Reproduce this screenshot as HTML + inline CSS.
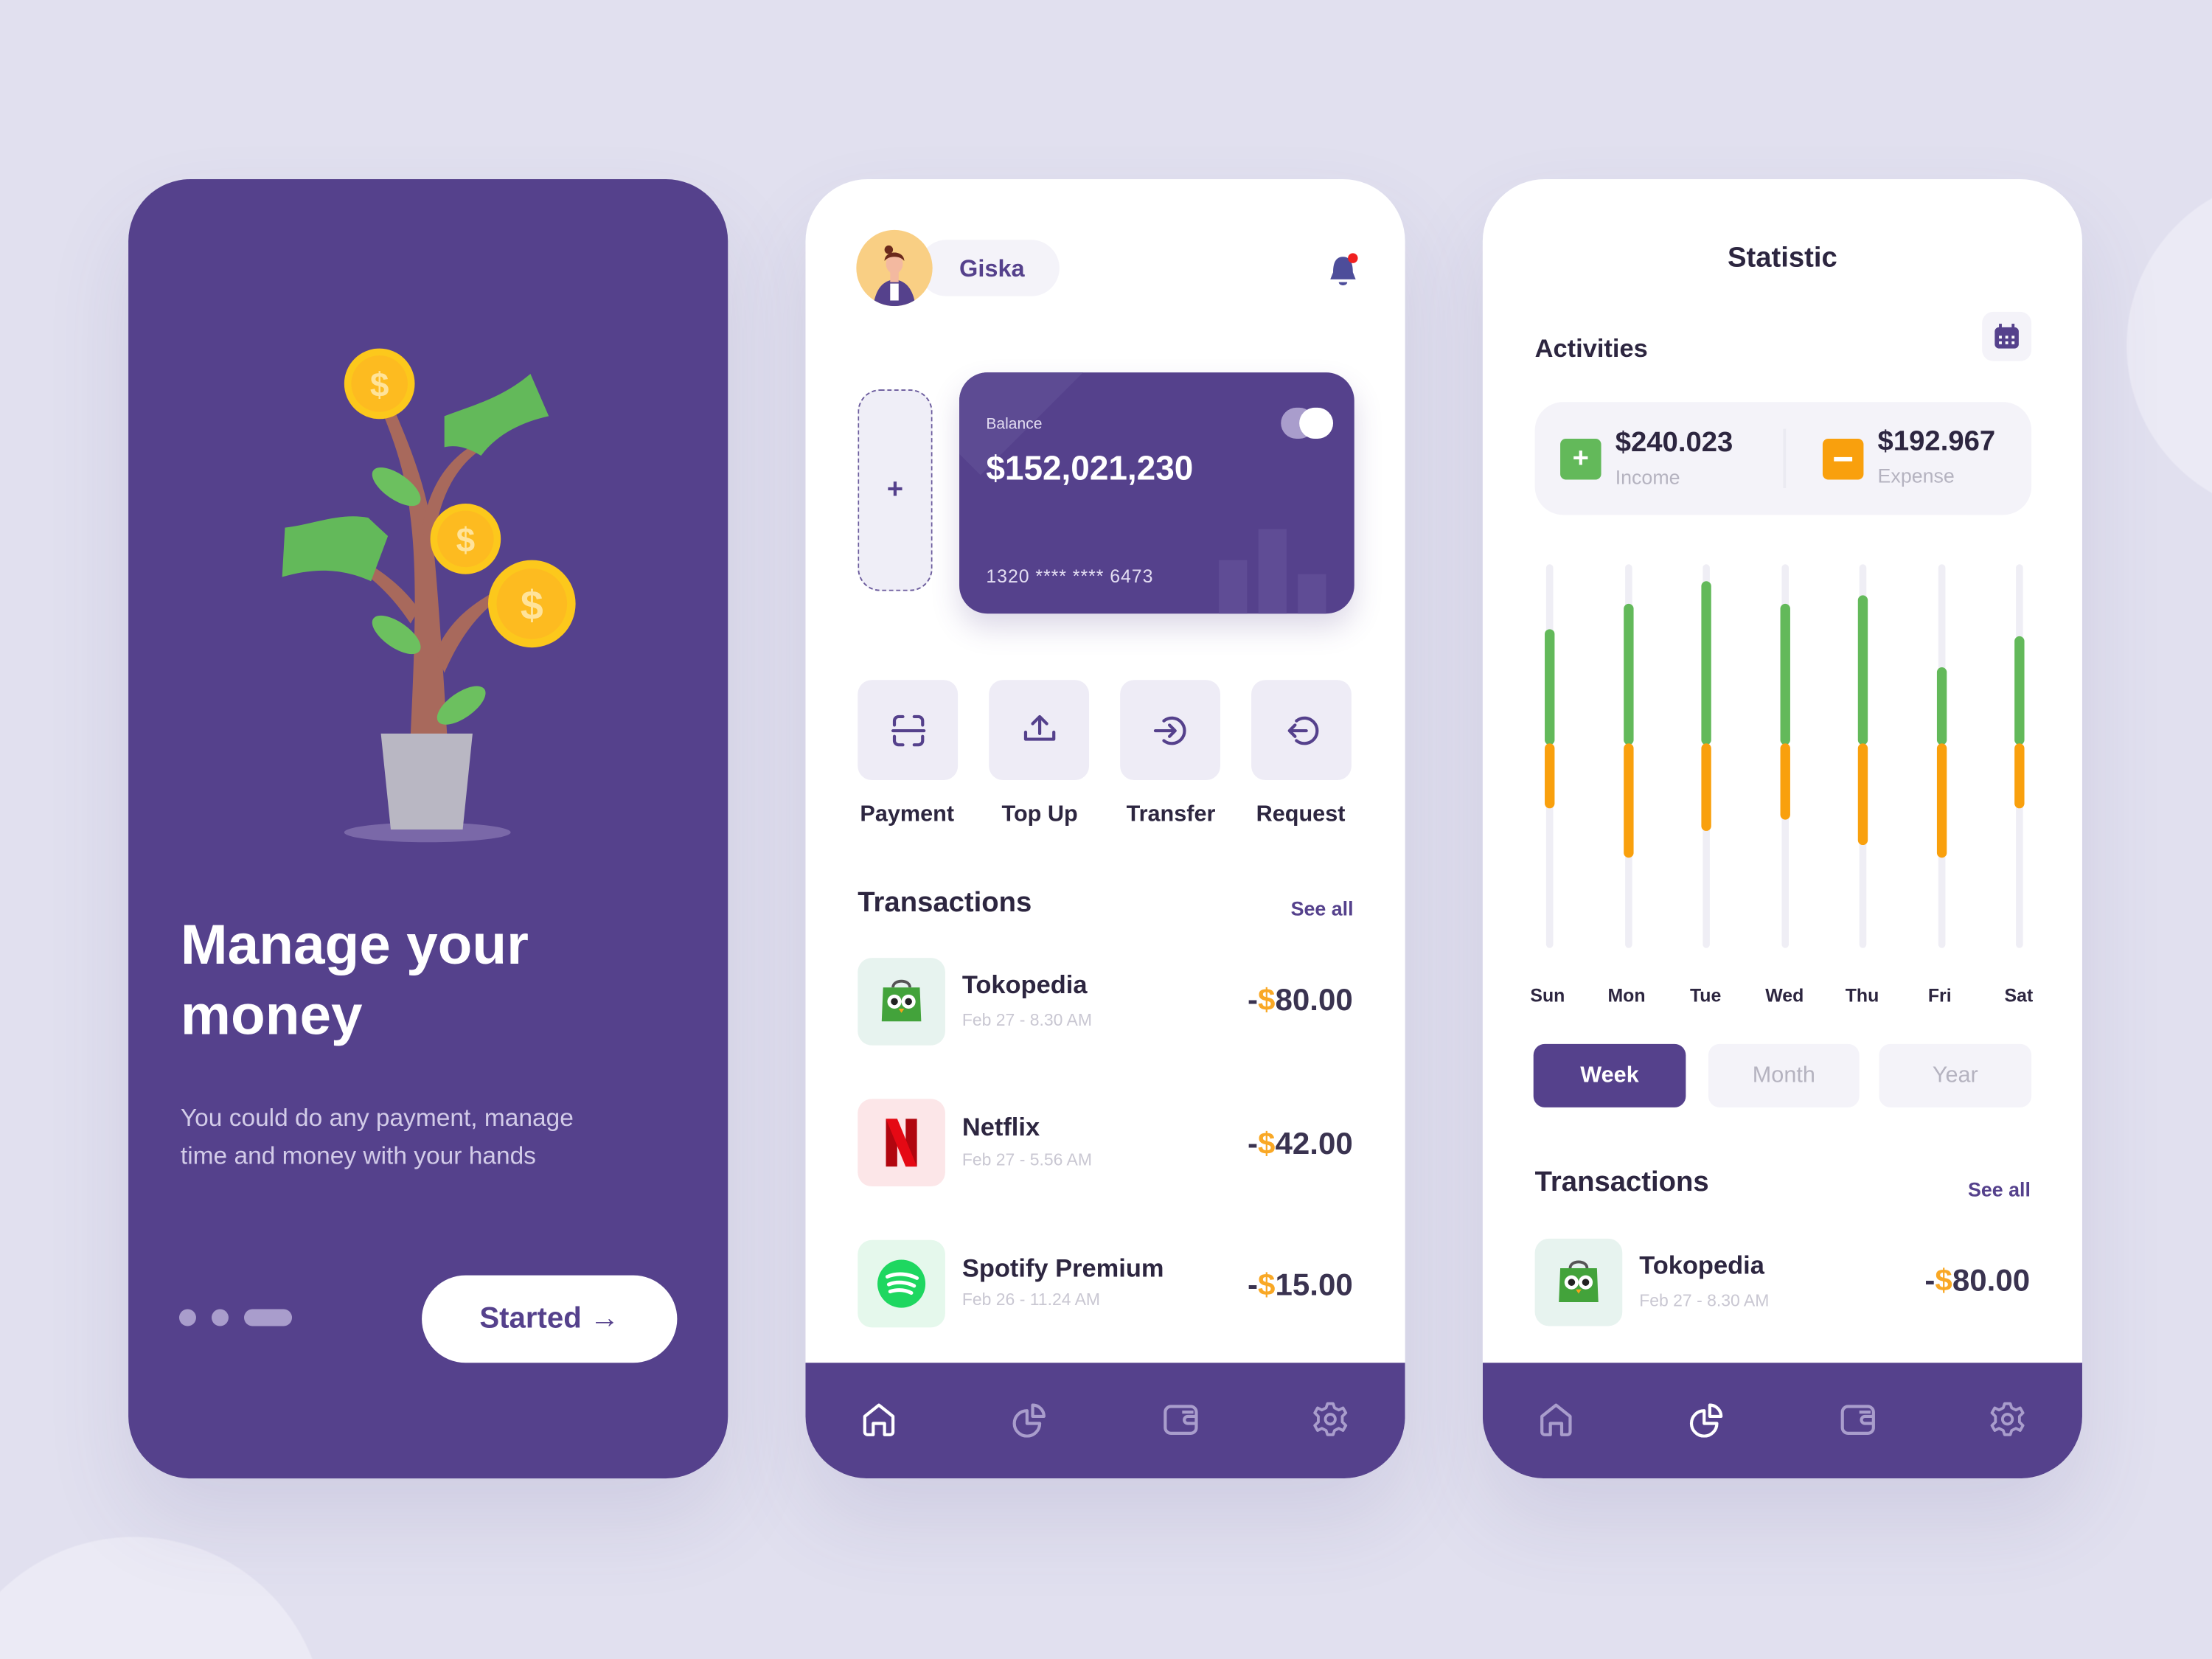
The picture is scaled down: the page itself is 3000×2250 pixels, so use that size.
<!DOCTYPE html>
<html><head><meta charset="utf-8">
<style>
*{margin:0;padding:0;box-sizing:border-box}
html,body{width:3000px;height:2250px;overflow:hidden;background:#e1e0ef}
#s{position:absolute;left:0;top:0;width:1568px;height:1176px;transform:scale(1.91327);transform-origin:0 0;font-family:"Liberation Sans",sans-serif;overflow:hidden;
background:radial-gradient(circle at 1628px 245px,#ebeaf5 120px,transparent 121px),radial-gradient(circle at 95px 1225px,#ebeaf5 135px,transparent 136px),#e1e0ef}
.a{position:absolute}
.card{position:absolute;top:127px;width:425px;height:921px;border-radius:44px;overflow:hidden;box-shadow:0 30px 60px rgba(80,70,140,.12)}
.w{background:#fff}
.t{position:absolute;white-space:nowrap}
.nav{position:absolute;left:0;bottom:0;width:425px;height:82px;background:#55418c}
.act{position:absolute;top:355px;width:71px;height:71px;background:#eeecf6;border-radius:10px}
.lbl{position:absolute;top:442px;font-size:16px;font-weight:bold;color:#2d2640;width:90px;text-align:center}
.ico{position:absolute;width:62px;height:62px;border-radius:10px}
.nm{font-size:18px;font-weight:bold;color:#2d2640}
.dt{font-size:12px;color:#c9c7d2}
.amt{font-size:22px;font-weight:bold;color:#3a3350;text-align:right}
.amt b{color:#f9a825}
.trk{position:absolute;top:273px;width:5px;height:272px;background:#efeef5;border-radius:3px}
.g{position:absolute;width:7px;background:#63b95a;border-radius:4px}
.o{position:absolute;width:7px;background:#f9a00d;border-radius:4px}
.dl{position:absolute;top:571px;font-size:13px;font-weight:bold;color:#2d2640;width:50px;text-align:center}
</style></head><body><div id="s">

<!-- LEFT CARD -->
<div class="card" style="left:91px;background:#55418c">
<svg class="a" style="left:0;top:0" width="425" height="500" viewBox="0 0 425 500">
<ellipse cx="212" cy="463" rx="59" ry="7" fill="#7a68a8"/>
<path d="M200 395 C203 330 205 280 200 240 C196 205 188 185 178 160 L186 158 C198 185 208 210 214 240 C218 270 222 330 226 395 Z" fill="#a8695c"/>
<path d="M208 250 C212 220 225 200 245 188 L248 193 C232 205 220 225 216 260Z" fill="#a8695c"/>
<path d="M218 335 C228 312 245 300 264 290 L266 295 C250 306 236 322 224 350Z" fill="#a8695c"/>
<path d="M206 305 C192 285 172 272 150 262 L148 267 C168 278 185 292 200 315Z" fill="#a8695c"/>
<path d="M224 168 C245 160 265 155 285 138 L298 168 C280 172 262 180 250 196 C240 190 232 188 224 190Z" fill="#63b95a"/>
<path d="M111 247 C130 245 150 236 170 240 L184 253 L172 285 C150 275 130 276 109 282Z" fill="#63b95a"/>
<g fill="#6cc05f">
<ellipse cx="190" cy="218" rx="20" ry="9" transform="rotate(35 190 218)"/>
<ellipse cx="190" cy="323" rx="20" ry="9" transform="rotate(35 190 323)"/>
<ellipse cx="236" cy="373" rx="20" ry="9" transform="rotate(-35 236 373)"/>
</g>
<path d="M179 393 L244 393 L237 461 L186 461Z" fill="#b9b7c3"/>
<g><circle cx="178" cy="145" r="25" fill="#fcc81c"/><circle cx="178" cy="145" r="20" fill="#fdbb20"/><text x="178" y="154" font-size="24" font-weight="bold" fill="#ffe39a" text-anchor="middle" font-family="Liberation Sans">$</text></g>
<g><circle cx="239" cy="255" r="25" fill="#fcc81c"/><circle cx="239" cy="255" r="20" fill="#fdbb20"/><text x="239" y="264" font-size="24" font-weight="bold" fill="#ffe39a" text-anchor="middle" font-family="Liberation Sans">$</text></g>
<g><circle cx="286" cy="301" r="31" fill="#fcc81c"/><circle cx="286" cy="301" r="25" fill="#fdbb20"/><text x="286" y="312" font-size="29" font-weight="bold" fill="#ffe39a" text-anchor="middle" font-family="Liberation Sans">$</text></g>
</svg>
<div class="t" style="left:37px;top:518px;font-size:40px;font-weight:bold;color:#fff;line-height:50px">Manage your<br>money</div>
<div class="t" style="left:37px;top:652px;font-size:17.5px;color:#d2cbe8;line-height:27px">You could do any payment, manage<br>time and money with your hands</div>
<div class="a" style="left:36px;top:801px;width:12px;height:12px;border-radius:50%;background:#a99dcc"></div>
<div class="a" style="left:59px;top:801px;width:12px;height:12px;border-radius:50%;background:#a99dcc"></div>
<div class="a" style="left:82px;top:801px;width:34px;height:12px;border-radius:6px;background:#a99dcc"></div>
<div class="a" style="left:208px;top:777px;width:181px;height:62px;border-radius:31px;background:#fff;color:#55418c;font-size:21px;font-weight:bold;text-align:center;line-height:62px">Started &#8594;</div>
</div>

<!-- MIDDLE CARD -->
<div class="card w" style="left:571px">
<div class="a" style="left:80px;top:43px;width:100px;height:40px;border-radius:20px;background:#f4f3f9"></div>
<div class="a" style="left:36px;top:36px;width:54px;height:54px;border-radius:50%;background:#f9cf84;overflow:hidden">
<svg width="54" height="54" viewBox="0 0 54 54"><path d="M12 54 C14 40 20 36 27 35 C34 36 40 40 42 54Z" fill="#55418c"/><rect x="24" y="28" width="6" height="9" fill="#f3b9a0"/><ellipse cx="27" cy="24" rx="6" ry="7" fill="#f3b9a0"/><path d="M20 22 C20 14 34 14 34 22 C31 18 23 18 20 22Z" fill="#6b2a1c"/><circle cx="23" cy="14" r="3" fill="#6b2a1c"/><rect x="24" y="38" width="6" height="12" fill="#fff"/></svg></div>
<div class="t" style="left:109px;top:54px;font-size:17px;font-weight:bold;color:#55418c">Giska</div>
<svg class="a" style="left:369px;top:52px" width="24" height="26" viewBox="0 0 24 26"><path d="M12 3 C6 3 5 9 5 14 L3 19 L21 19 L19 14 C19 9 18 3 12 3Z" fill="#4d4d9a"/><path d="M9 21 C9 24 15 24 15 21Z" fill="#4d4d9a"/><circle cx="19" cy="4" r="3.5" fill="#f02020"/></svg>
<div class="a" style="left:37px;top:149px;width:53px;height:143px;border-radius:16px;border:1.5px dashed #6a5a9c;background:#efeef7;color:#55418c;font-size:20px;font-weight:bold;text-align:center;line-height:140px">+</div>
<div class="a" style="left:109px;top:137px;width:280px;height:171px;border-radius:20px;background:#55418c;overflow:hidden;box-shadow:0 10px 20px rgba(85,65,140,.2)">
<div class="a" style="left:-40px;top:-60px;width:110px;height:110px;background:#5d4b93;transform:rotate(45deg)"></div>
<div class="a" style="left:184px;top:133px;width:20px;height:40px;background:#5f4c95"></div>
<div class="a" style="left:212px;top:111px;width:20px;height:62px;background:#5f4c95"></div>
<div class="a" style="left:240px;top:143px;width:20px;height:30px;background:#5f4c95"></div>
<div class="t" style="left:19px;top:31px;font-size:11px;color:#e3ddf2">Balance</div>
<div class="t" style="left:19px;top:55px;font-size:24px;font-weight:bold;color:#fff">$152,021,230</div>
<div class="t" style="left:19px;top:137px;font-size:13px;color:#e3ddf2;letter-spacing:.5px">1320 **** **** 6473</div>
<div class="a" style="left:228px;top:25px;width:24px;height:22px;border-radius:11px;background:#a99dcc"></div>
<div class="a" style="left:241px;top:25px;width:24px;height:22px;border-radius:11px;background:#fff"></div>
</div>
<div class="act" style="left:37px"><svg class="a" style="left:23px;top:23px" width="26" height="26" viewBox="0 0 26 26" fill="none" stroke="#55418c" stroke-width="2.2" stroke-linecap="round"><path d="M3 9 V6 A3 3 0 0 1 6 3 H9 M17 3 H20 A3 3 0 0 1 23 6 V9 M3 17 V20 A3 3 0 0 0 6 23 H9 M17 23 H20 A3 3 0 0 0 23 20 V17 M2 13 H24"/></svg></div>
<div class="act" style="left:130px"><svg class="a" style="left:23px;top:22px" width="26" height="26" viewBox="0 0 26 26" fill="none" stroke="#55418c" stroke-width="2.2" stroke-linecap="round" stroke-linejoin="round"><path d="M13 16 V4 M8 9 L13 4 L18 9 M3 15 V20 H23 V15"/></svg></div>
<div class="act" style="left:223px"><svg class="a" style="left:23px;top:23px" width="26" height="26" viewBox="0 0 26 26" fill="none" stroke="#55418c" stroke-width="2.2" stroke-linecap="round" stroke-linejoin="round"><path d="M8 6 A9 9 0 1 1 8 20 M2 13 H16 M12 9 L16 13 L12 17"/></svg></div>
<div class="act" style="left:316px"><svg class="a" style="left:23px;top:23px" width="26" height="26" viewBox="0 0 26 26" fill="none" stroke="#55418c" stroke-width="2.2" stroke-linecap="round" stroke-linejoin="round"><path d="M9 6 A9 9 0 1 1 9 20 M4 13 H16 M8 9 L4 13 L8 17"/></svg></div>
<div class="lbl" style="left:27px">Payment</div>
<div class="lbl" style="left:121px">Top Up</div>
<div class="lbl" style="left:214px">Transfer</div>
<div class="lbl" style="left:306px">Request</div>
<div class="t" style="left:37px;top:502px;font-size:20px;font-weight:bold;color:#2d2640">Transactions</div>
<div class="t" style="left:344px;top:509px;font-size:14px;font-weight:bold;color:#55418c">See all</div>
<div class="ico" style="left:37px;top:552px;background:#e7f3ef"><svg class="a" style="left:14px;top:13px" width="34" height="36" viewBox="0 0 34 36"><path d="M11 8 C11 2 23 2 23 8" fill="none" stroke="#555" stroke-width="2"/><path d="M4 8 H30 L31 32 H3Z" fill="#43a33b"/><circle cx="12" cy="18" r="5" fill="#fff"/><circle cx="22" cy="18" r="5" fill="#fff"/><circle cx="12" cy="18" r="2.5" fill="#222"/><circle cx="22" cy="18" r="2.5" fill="#222"/><path d="M15 23 L19 23 L17 26Z" fill="#f7a21b"/></svg></div>
<div class="t nm" style="left:111px;top:561px">Tokopedia</div>
<div class="t dt" style="left:111px;top:589px">Feb 27 - 8.30 AM</div>
<div class="t amt" style="right:37px;top:569px">-<b>$</b>80.00</div>
<div class="ico" style="left:37px;top:652px;background:#fce6e8"><svg class="a" style="left:19px;top:14px" width="24" height="34" viewBox="0 0 24 34"><path d="M1 0 H9 V34 H1Z" fill="#b1060f"/><path d="M15 0 H23 V34 H15Z" fill="#b1060f"/><path d="M1 0 H9 L23 34 H15Z" fill="#e50914"/></svg></div>
<div class="t nm" style="left:111px;top:662px">Netflix</div>
<div class="t dt" style="left:111px;top:688px">Feb 27 - 5.56 AM</div>
<div class="t amt" style="right:37px;top:671px">-<b>$</b>42.00</div>
<div class="ico" style="left:37px;top:752px;background:#e5f8ec"><svg class="a" style="left:12px;top:12px" width="38" height="38" viewBox="0 0 38 38"><circle cx="19" cy="19" r="17" fill="#1ed760"/><path d="M9 14 C16 11 24 12 30 15 M10 19.5 C16 17 23 18 28 20.5 M11 24.5 C16 23 21 23 26 25.5" fill="none" stroke="#fff" stroke-width="2.6" stroke-linecap="round"/></svg></div>
<div class="t nm" style="left:111px;top:762px">Spotify Premium</div>
<div class="t dt" style="left:111px;top:787px">Feb 26 - 11.24 AM</div>
<div class="t amt" style="right:37px;top:771px">-<b>$</b>15.00</div>
<div class="nav">
<svg class="a" style="left:39px;top:27px" width="26" height="26" viewBox="0 0 26 26" fill="none" stroke="#fff" stroke-width="2.2" stroke-linejoin="round"><path d="M3 11 L13 3 L23 11 V22 A2 2 0 0 1 21 24 H17 V16 H9 V24 H5 A2 2 0 0 1 3 22Z"/></svg>
<svg class="a" style="left:146px;top:27px" width="26" height="26" viewBox="0 0 26 26" fill="none" stroke="#a99dcc" stroke-width="2.2" stroke-linejoin="round"><path d="M11 7 A9 9 0 1 0 20 16 H11Z"/><path d="M15 3 A8 8 0 0 1 23 11 H15Z"/></svg>
<svg class="a" style="left:253px;top:28px" width="26" height="24" viewBox="0 0 26 24" fill="none" stroke="#a99dcc" stroke-width="2.2" stroke-linejoin="round"><rect x="2" y="3" width="22" height="19" rx="4"/><path d="M24 10 H18 A2.5 2.5 0 0 0 18 15 H24 M14 7 H22"/></svg>
<svg class="a" style="left:359px;top:27px" width="26" height="26" viewBox="0 0 26 26" fill="none" stroke="#a99dcc" stroke-width="2"><circle cx="13" cy="13" r="3.5"/><path d="M11 2 H15 L16 5 L19 6.5 L22 5 L24 8.5 L21.5 11 V15 L24 17.5 L22 21 L19 19.5 L16 21 L15 24 H11 L10 21 L7 19.5 L4 21 L2 17.5 L4.5 15 V11 L2 8.5 L4 5 L7 6.5 L10 5Z" stroke-linejoin="round"/></svg>
</div>
</div>

<!-- RIGHT CARD -->
<div class="card w" style="left:1051px">
<div class="t" style="left:0;width:425px;text-align:center;top:45px;font-size:20px;font-weight:bold;color:#2d2640">Statistic</div>
<div class="t" style="left:37px;top:110px;font-size:18px;font-weight:bold;color:#2d2640">Activities</div>
<div class="a" style="left:354px;top:94px;width:35px;height:35px;border-radius:8px;background:#f4f3f9"><svg class="a" style="left:8px;top:8px" width="19" height="19" viewBox="0 0 19 19"><rect x="1" y="3" width="17" height="15" rx="3" fill="#55418c"/><rect x="4" y="0.5" width="2" height="4" fill="#55418c"/><rect x="13" y="0.5" width="2" height="4" fill="#55418c"/><g fill="#fff"><rect x="4" y="9" width="2" height="2"/><rect x="8.5" y="9" width="2" height="2"/><rect x="13" y="9" width="2" height="2"/><rect x="4" y="13" width="2" height="2"/><rect x="8.5" y="13" width="2" height="2"/><rect x="13" y="13" width="2" height="2"/></g></svg></div>
<div class="a" style="left:37px;top:158px;width:352px;height:80px;border-radius:20px;background:#f4f3f9"></div>
<div class="a" style="left:55px;top:184px;width:29px;height:29px;border-radius:4px;background:#63b95a;color:#fff;font-size:20px;font-weight:bold;text-align:center;line-height:29px">+</div>
<div class="t" style="left:94px;top:176px;font-size:20px;font-weight:bold;color:#2d2640">$240.023</div>
<div class="t" style="left:94px;top:203px;font-size:14px;color:#b5b3c0">Income</div>
<div class="a" style="left:213px;top:177px;width:2px;height:42px;background:#ebeaf2"></div>
<div class="a" style="left:241px;top:184px;width:29px;height:29px;border-radius:4px;background:#f9a00d"><div class="a" style="left:8px;top:13px;width:13px;height:2.5px;background:#fff"></div></div>
<div class="t" style="left:280px;top:175px;font-size:20px;font-weight:bold;color:#2d2640">$192.967</div>
<div class="t" style="left:280px;top:202px;font-size:14px;color:#b5b3c0">Expense</div>

<div class="trk" style="left:44.5px"></div><div class="g" style="left:43.5px;top:319px;height:82px"></div><div class="o" style="left:43.5px;top:400px;height:46px"></div>
<div class="trk" style="left:100.5px"></div><div class="g" style="left:99.5px;top:301px;height:100px"></div><div class="o" style="left:99.5px;top:400px;height:81px"></div>
<div class="trk" style="left:155.5px"></div><div class="g" style="left:154.5px;top:285px;height:116px"></div><div class="o" style="left:154.5px;top:400px;height:62px"></div>
<div class="trk" style="left:211.5px"></div><div class="g" style="left:210.5px;top:301px;height:100px"></div><div class="o" style="left:210.5px;top:400px;height:54px"></div>
<div class="trk" style="left:266.5px"></div><div class="g" style="left:265.5px;top:295px;height:106px"></div><div class="o" style="left:265.5px;top:400px;height:72px"></div>
<div class="trk" style="left:322.5px"></div><div class="g" style="left:321.5px;top:346px;height:55px"></div><div class="o" style="left:321.5px;top:400px;height:81px"></div>
<div class="trk" style="left:377.5px"></div><div class="g" style="left:376.5px;top:324px;height:77px"></div><div class="o" style="left:376.5px;top:400px;height:46px"></div>
<div class="dl" style="left:21px">Sun</div><div class="dl" style="left:77px">Mon</div><div class="dl" style="left:133px">Tue</div><div class="dl" style="left:189px">Wed</div><div class="dl" style="left:244px">Thu</div><div class="dl" style="left:299px">Fri</div><div class="dl" style="left:355px">Sat</div>

<div class="a" style="left:36px;top:613px;width:108px;height:45px;border-radius:8px;background:#55418c;color:#fff;font-size:16px;font-weight:bold;text-align:center;line-height:45px">Week</div>
<div class="a" style="left:160px;top:613px;width:107px;height:45px;border-radius:8px;background:#f4f3f9;color:#b5b3c0;font-size:16px;text-align:center;line-height:45px">Month</div>
<div class="a" style="left:281px;top:613px;width:108px;height:45px;border-radius:8px;background:#f4f3f9;color:#b5b3c0;font-size:16px;text-align:center;line-height:45px">Year</div>

<div class="t" style="left:37px;top:700px;font-size:20px;font-weight:bold;color:#2d2640">Transactions</div>
<div class="t" style="left:344px;top:708px;font-size:14px;font-weight:bold;color:#55418c">See all</div>
<div class="ico" style="left:37px;top:751px;background:#e7f3ef"><svg class="a" style="left:14px;top:13px" width="34" height="36" viewBox="0 0 34 36"><path d="M11 8 C11 2 23 2 23 8" fill="none" stroke="#555" stroke-width="2"/><path d="M4 8 H30 L31 32 H3Z" fill="#43a33b"/><circle cx="12" cy="18" r="5" fill="#fff"/><circle cx="22" cy="18" r="5" fill="#fff"/><circle cx="12" cy="18" r="2.5" fill="#222"/><circle cx="22" cy="18" r="2.5" fill="#222"/><path d="M15 23 L19 23 L17 26Z" fill="#f7a21b"/></svg></div>
<div class="t nm" style="left:111px;top:760px">Tokopedia</div>
<div class="t dt" style="left:111px;top:788px">Feb 27 - 8.30 AM</div>
<div class="t amt" style="right:37px;top:768px">-<b>$</b>80.00</div>
<div class="nav">
<svg class="a" style="left:39px;top:27px" width="26" height="26" viewBox="0 0 26 26" fill="none" stroke="#a99dcc" stroke-width="2.2" stroke-linejoin="round"><path d="M3 11 L13 3 L23 11 V22 A2 2 0 0 1 21 24 H17 V16 H9 V24 H5 A2 2 0 0 1 3 22Z"/></svg>
<svg class="a" style="left:146px;top:27px" width="26" height="26" viewBox="0 0 26 26" fill="none" stroke="#fff" stroke-width="2.2" stroke-linejoin="round"><path d="M11 7 A9 9 0 1 0 20 16 H11Z"/><path d="M15 3 A8 8 0 0 1 23 11 H15Z"/></svg>
<svg class="a" style="left:253px;top:28px" width="26" height="24" viewBox="0 0 26 24" fill="none" stroke="#a99dcc" stroke-width="2.2" stroke-linejoin="round"><rect x="2" y="3" width="22" height="19" rx="4"/><path d="M24 10 H18 A2.5 2.5 0 0 0 18 15 H24 M14 7 H22"/></svg>
<svg class="a" style="left:359px;top:27px" width="26" height="26" viewBox="0 0 26 26" fill="none" stroke="#a99dcc" stroke-width="2"><circle cx="13" cy="13" r="3.5"/><path d="M11 2 H15 L16 5 L19 6.5 L22 5 L24 8.5 L21.5 11 V15 L24 17.5 L22 21 L19 19.5 L16 21 L15 24 H11 L10 21 L7 19.5 L4 21 L2 17.5 L4.5 15 V11 L2 8.5 L4 5 L7 6.5 L10 5Z" stroke-linejoin="round"/></svg>
</div>
</div>
</div></body></html>
